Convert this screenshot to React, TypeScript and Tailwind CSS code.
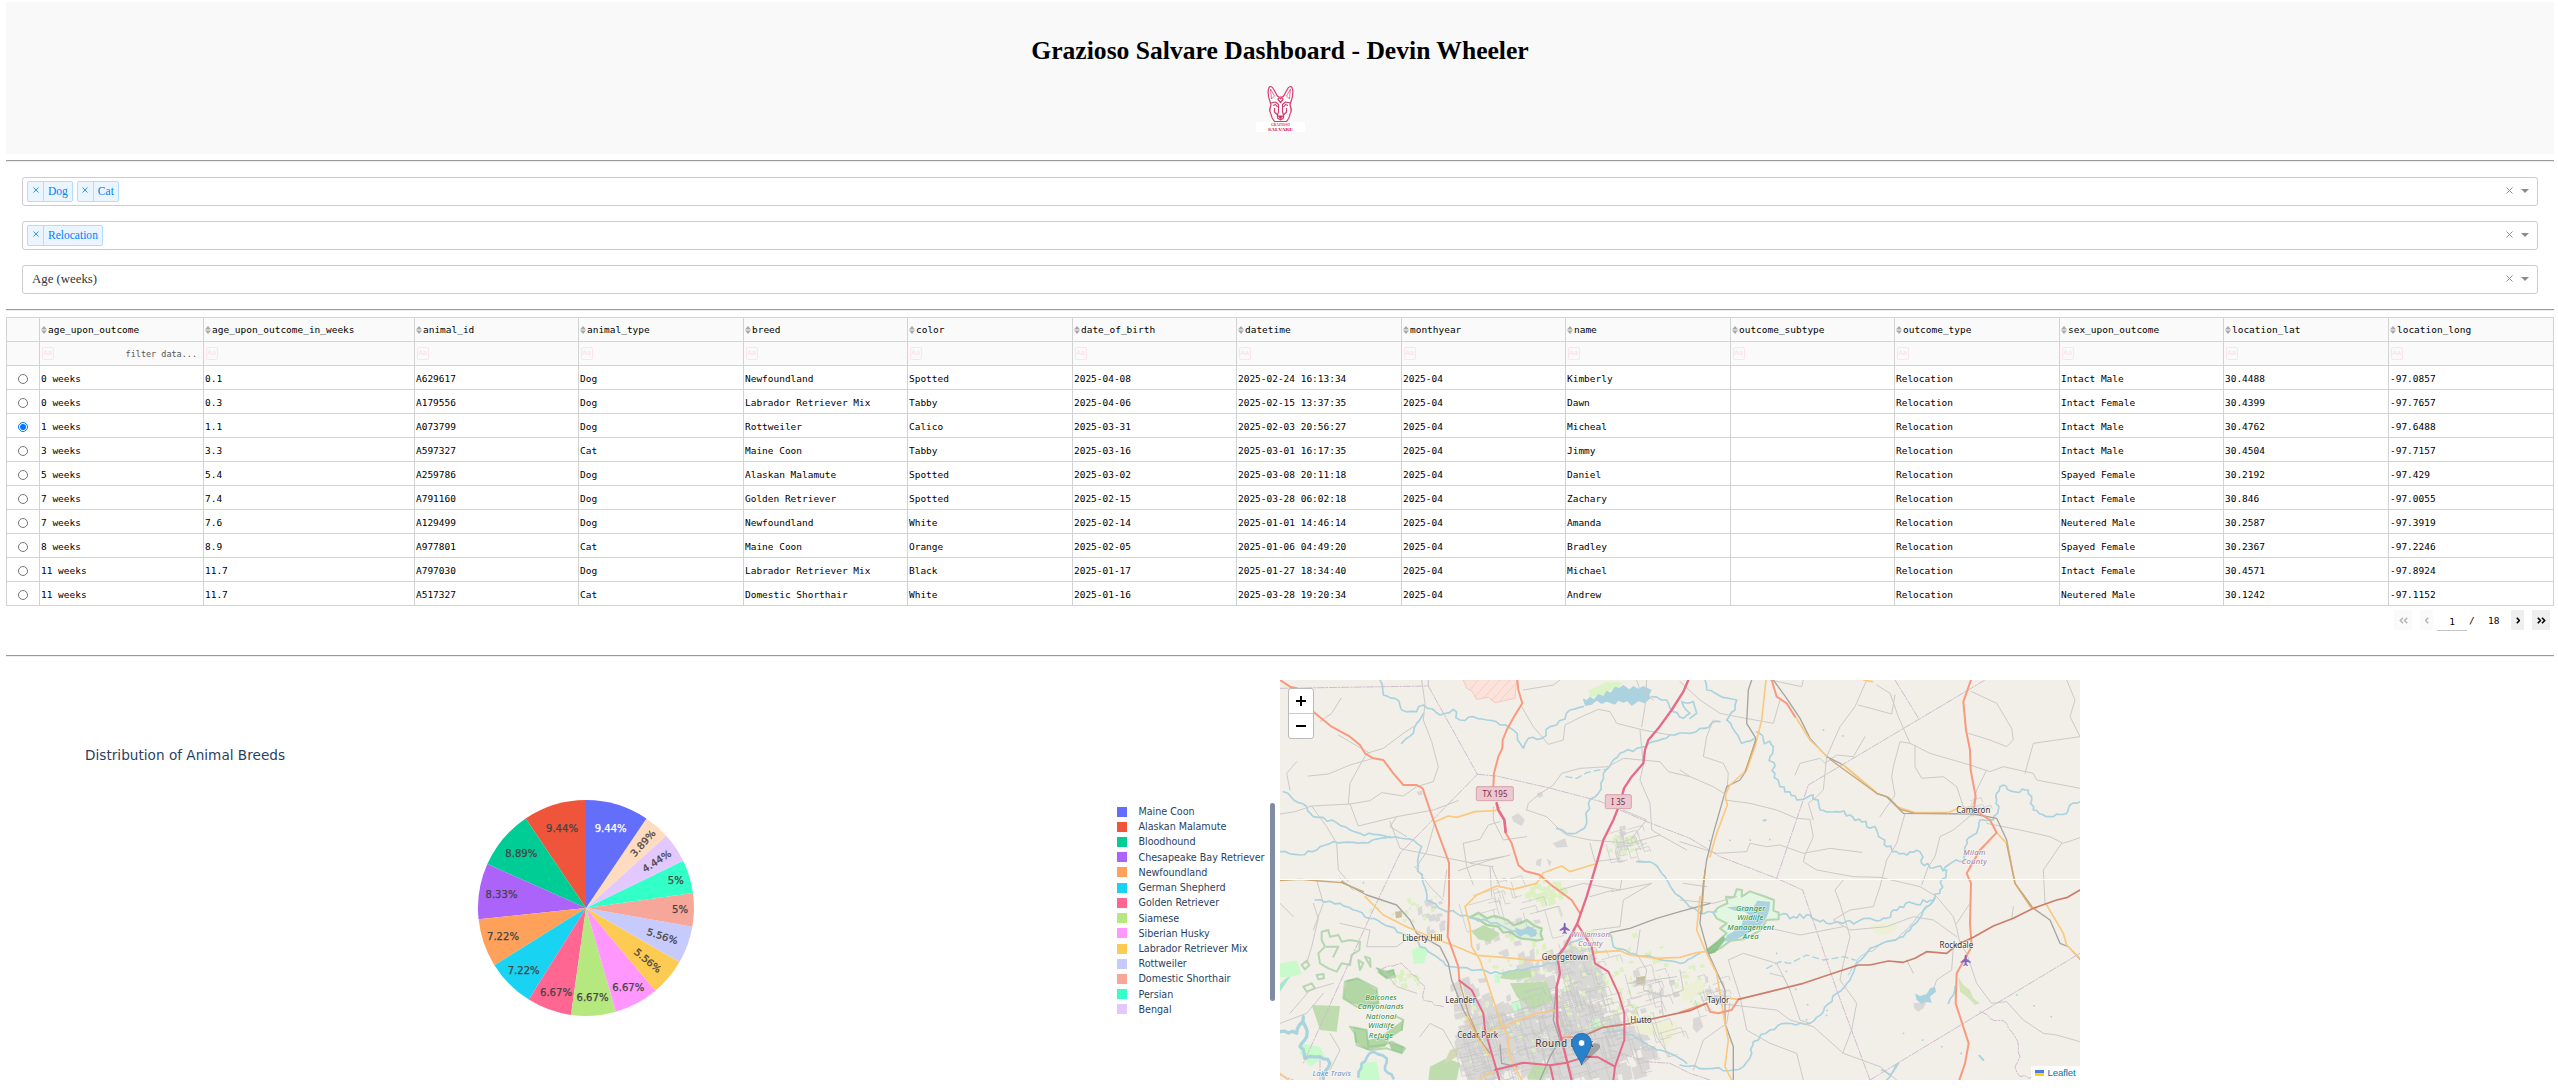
import React from "react";

const COLUMNS = [
  "age_upon_outcome",
  "age_upon_outcome_in_weeks",
  "animal_id",
  "animal_type",
  "breed",
  "color",
  "date_of_birth",
  "datetime",
  "monthyear",
  "name",
  "outcome_subtype",
  "outcome_type",
  "sex_upon_outcome",
  "location_lat",
  "location_long",
];

const ROWS = [
  ["0 weeks", "0.1", "A629617", "Dog", "Newfoundland", "Spotted", "2025-04-08", "2025-02-24 16:13:34", "2025-04", "Kimberly", "", "Relocation", "Intact Male", "30.4488", "-97.0857"],
  ["0 weeks", "0.3", "A179556", "Dog", "Labrador Retriever Mix", "Tabby", "2025-04-06", "2025-02-15 13:37:35", "2025-04", "Dawn", "", "Relocation", "Intact Female", "30.4399", "-97.7657"],
  ["1 weeks", "1.1", "A073799", "Dog", "Rottweiler", "Calico", "2025-03-31", "2025-02-03 20:56:27", "2025-04", "Micheal", "", "Relocation", "Intact Male", "30.4762", "-97.6488"],
  ["3 weeks", "3.3", "A597327", "Cat", "Maine Coon", "Tabby", "2025-03-16", "2025-03-01 16:17:35", "2025-04", "Jimmy", "", "Relocation", "Intact Male", "30.4504", "-97.7157"],
  ["5 weeks", "5.4", "A259786", "Dog", "Alaskan Malamute", "Spotted", "2025-03-02", "2025-03-08 20:11:18", "2025-04", "Daniel", "", "Relocation", "Spayed Female", "30.2192", "-97.429"],
  ["7 weeks", "7.4", "A791160", "Dog", "Golden Retriever", "Spotted", "2025-02-15", "2025-03-28 06:02:18", "2025-04", "Zachary", "", "Relocation", "Intact Female", "30.846", "-97.0055"],
  ["7 weeks", "7.6", "A129499", "Dog", "Newfoundland", "White", "2025-02-14", "2025-01-01 14:46:14", "2025-04", "Amanda", "", "Relocation", "Neutered Male", "30.2587", "-97.3919"],
  ["8 weeks", "8.9", "A977801", "Cat", "Maine Coon", "Orange", "2025-02-05", "2025-01-06 04:49:20", "2025-04", "Bradley", "", "Relocation", "Spayed Female", "30.2367", "-97.2246"],
  ["11 weeks", "11.7", "A797030", "Dog", "Labrador Retriever Mix", "Black", "2025-01-17", "2025-01-27 18:34:40", "2025-04", "Michael", "", "Relocation", "Intact Female", "30.4571", "-97.8924"],
  ["11 weeks", "11.7", "A517327", "Cat", "Domestic Shorthair", "White", "2025-01-16", "2025-03-28 19:20:34", "2025-04", "Andrew", "", "Relocation", "Neutered Male", "30.1242", "-97.1152"],
];

const GRID =
  "grid grid-cols-[33px_164px_211px_164px_165px_164px_165px_164px_165px_164px_165px_164px_165px_164px_165px_165px]";
const CELL = "h-6 border-r border-b border-[#d3d3d3]";

function Rule() {
  return <div className="h-[2px] border-t border-b border-t-[#9a9a9a] border-b-[#eeeeee]" />;
}

function DogLogo() {
  return (
    <svg width="49" height="46" viewBox="0 0 49 46" className="block">
      <rect x="0" y="36" width="49" height="10" fill="#fff" />
      <g transform="translate(-1.500 0)">
        <g fill="none" stroke="#d63a6a" strokeWidth="1.200" strokeLinejoin="round">
          <path fill="#fff" d="M15.500 15.500C13.500 10 13.500 4 14.500 1.500C15.500 0 18 .5 19 3L22.500 9.500L24 11H28L29.500 9.500L33 3C34 .5 36.500 0 37.500 1.500C38.500 4 38.500 10 36.500 15.500L35.500 19C37 23 37.500 25 35.500 28C35 32 33.500 34 32 35.500H20C18.500 34 17 32 16.500 28C14.500 25 15 23 16.500 19Z" />
          <path d="M16 3L17 13L20 10L16 3M36 3L35 13L32 10L36 3" strokeWidth=".7" />
          <path d="M26 16.500L23.500 13.500C23.500 11.500 26 11.500 26 13C26 11.500 28.500 11.500 28.500 13.500Z" />
          <path d="M16 17L21 16L24 18.500V26L23 29V32L26 34L29 32V29L28 26V18.500L31 16L36 17M18.500 19.500L21 18.500L23 21M33.500 19.500L31 18.500L29 21M20 22V26L23 29M32 22V26L29 29" />
          <path d="M24 30H28L26 32.500Z" fill="#b82050" />
        </g>
        <text x="26" y="39.800" textAnchor="middle" textLength="19" lengthAdjust="spacingAndGlyphs" fontFamily="'Liberation Serif', serif" fontWeight="700" fontSize="3.400" fill="#dd3344">GRAZIOSO</text>
        <text x="26" y="44.800" textAnchor="middle" textLength="25" lengthAdjust="spacingAndGlyphs" fontFamily="'Liberation Serif', serif" fontWeight="700" fontSize="4.800" fill="#d8101c">SALVARE</text>
      </g>
    </svg>
  );
}

function Dropdown({ chips, value }: { chips?: string[]; value?: string }) {
  return (
    <div className="flex h-[29px] items-center rounded-[3px] border border-[#cccccc] bg-white pl-1 font-['Liberation_Serif',serif]">
      {chips?.map((c) => (
        <div key={c} className="mr-1 flex h-[21px] items-stretch rounded-[2px] border border-[#b5dbff] bg-[#ebf5ff] text-[11.52px] leading-[19px] text-[#007eff]">
          <span className="flex w-[16px] justify-center border-r border-[#b5dbff] pt-[5px]">
            <svg width="6" height="6" viewBox="0 0 6 6">
              <path d="M.5.5L5.500 5.500M5.500.5L.5 5.500" stroke="#007eff" strokeWidth=".8" />
            </svg>
          </span>
          <span className="px-1">{c}</span>
        </div>
      ))}
      {value && <span className="pl-[5px] text-[12.8px] text-[#333333]">{value}</span>}
      <div className="ml-auto flex items-center gap-2 pr-2">
        <svg width="7" height="7" viewBox="0 0 7 7" className="-mt-[3px]">
          <path d="M.5.5L6.500 6.500M6.500.5L.5 6.500" stroke="#8c8c8c" strokeWidth="1" />
        </svg>
        <svg width="8" height="4" viewBox="0 0 8 4" className="-mt-[2px]">
          <path d="M0 0H8L4 4Z" fill="#8c8c8c" />
        </svg>
      </div>
    </div>
  );
}

function DataTable() {
  return (
    <div className="border-t border-l border-[#d3d3d3] font-['DejaVu_Sans_Mono',monospace] text-[9.48px] text-black">
      <div className={GRID}>
        <div className={`${CELL} bg-[#fafafa]`} />
        {COLUMNS.map((c) => (
          <div key={c} className={`${CELL} flex items-center bg-[#fafafa] pl-px pt-[2px]`}>
            <svg width="6" height="8" viewBox="0 0 6 8" className="mr-px -mt-[2px] shrink-0">
              <path d="M0 3.400L3 0L6 3.400ZM0 4.600H6L3 8Z" fill="#a8a8a8" />
            </svg>
            {c}
          </div>
        ))}
      </div>
      <div className={GRID}>
        <div className={`${CELL} bg-[#fafafa]`} />
        {COLUMNS.map((c, i) => (
          <div key={c} className={`${CELL} flex items-center justify-between bg-[#fafafa] pr-[6px] pl-[1.500px]`}>
            <span className="flex h-[13px] w-[12px] items-center justify-center rounded-[2px] border border-[#fce4ea] font-['Liberation_Sans',sans-serif] text-[7px] text-[#fbdfe6]">
              Aa
            </span>
            {i === 0 && <span className="pt-[2px] text-[8.480px] text-[#555555]">filter data...</span>}
          </div>
        ))}
      </div>
      {ROWS.map((r, ri) => (
        <div key={ri} className={GRID}>
          <div className={`${CELL} flex items-center justify-center pt-[2px]`}>
            <span
              className={
                ri === 2
                  ? "flex size-[10px] items-center justify-center rounded-full border border-[#0075ff] bg-white"
                  : "size-[10px] rounded-full border border-[#767676] bg-white"
              }
            >
              {ri === 2 && <span className="size-[6px] rounded-full bg-[#0075ff]" />}
            </span>
          </div>
          {r.map((v, i) => (
            <div key={i} className={`${CELL} flex items-center pl-px pt-[4px] whitespace-pre`}>
              {v}
            </div>
          ))}
        </div>
      ))}
    </div>
  );
}

function Chevrons({ double, left, color }: { double?: boolean; left?: boolean; color: string }) {
  const w = double ? 9 : 4;
  return (
    <svg width={w} height="7" viewBox={`0 0 ${w} 7`} className={left ? "-scale-x-100" : ""}>
      <path d={double ? "M.8.800L3.400 3.500L.8 6.200M5 .8L7.600 3.500L5 6.200" : "M.8.800L3.400 3.500L.8 6.200"} fill="none" stroke={color} strokeWidth="1.600" />
    </svg>
  );
}

function Pagination() {
  return (
    <div className="mt-[4px] flex h-[21px] justify-end pr-1 font-['DejaVu_Sans_Mono',monospace] text-[9.500px] text-black">
      <span className="mr-2 flex h-5 w-[18px] items-center justify-center bg-[#fafafa]"><Chevrons double left color="#b5b5b5" /></span>
      <span className="mr-1 flex h-5 w-[13px] items-center justify-center bg-[#fafafa]"><Chevrons left color="#b5b5b5" /></span>
      <span className="h-[21px] w-[30px] border-b border-[#c4c4c4] text-center leading-[23px]">1</span>
      <span className="ml-[2px] w-[6px] leading-[22px]">/</span>
      <span className="ml-[13px] w-[23px] leading-[22px]">18</span>
      <span className="mr-2 flex h-5 w-[13px] items-center justify-center bg-[#efefef]"><Chevrons color="#000" /></span>
      <span className="flex h-5 w-[18px] items-center justify-center bg-[#efefef]"><Chevrons double color="#000" /></span>
    </div>
  );
}

type Slice = { n: number; color: string; label: string; x: number; y: number; r?: number; light?: boolean };

/* Counter-clockwise from twelve o'clock; the largest slice closes the circle. */
const SLICES: Slice[] = [
  { n: 17, color: "#EF553B", label: "9.44%", x: 122, y: 58.700 },
  { n: 16, color: "#00CC96", label: "8.89%", x: 81.300, y: 83.700 },
  { n: 15, color: "#AB63FA", label: "8.33%", x: 61.500, y: 124.700 },
  { n: 13, color: "#FFA15A", label: "7.22%", x: 63, y: 166.700 },
  { n: 13, color: "#19D3F3", label: "7.22%", x: 83.700, y: 200.700 },
  { n: 12, color: "#FF6692", label: "6.67%", x: 116, y: 222.700 },
  { n: 12, color: "#B6E880", label: "6.67%", x: 152.500, y: 227.700 },
  { n: 12, color: "#FF97FF", label: "6.67%", x: 188.300, y: 217.700 },
  { n: 10, color: "#FECB52", label: "5.56%", x: 207.700, y: 190.700, r: 40 },
  { n: 10, color: "#C6CAFD", label: "5.56%", x: 222.300, y: 166.300, r: 18 },
  { n: 9, color: "#F7A799", label: "5%", x: 240, y: 139.700 },
  { n: 9, color: "#33FFC9", label: "5%", x: 235.700, y: 110.700 },
  { n: 8, color: "#E2C8FD", label: "4.44%", x: 216.700, y: 91.300, r: -33 },
  { n: 7, color: "#FFDCC0", label: "3.89%", x: 203, y: 73.300, r: -48 },
  { n: 17, color: "#636EFA", label: "9.44%", x: 170.700, y: 58.700, light: true },
];

const LEGEND: [string, string][] = [
  ["Maine Coon", "#636EFA"],
  ["Alaskan Malamute", "#EF553B"],
  ["Bloodhound", "#00CC96"],
  ["Chesapeake Bay Retriever", "#AB63FA"],
  ["Newfoundland", "#FFA15A"],
  ["German Shepherd", "#19D3F3"],
  ["Golden Retriever", "#FF6692"],
  ["Siamese", "#B6E880"],
  ["Siberian Husky", "#FF97FF"],
  ["Labrador Retriever Mix", "#FECB52"],
  ["Rottweiler", "#C6CAFD"],
  ["Domestic Shorthair", "#F7A799"],
  ["Persian", "#33FFC9"],
  ["Bengal", "#E2C8FD"],
];

function Pie() {
  const cx = 146, cy = 138, R = 108;
  let acc = 0;
  return (
    <svg width="300" height="270" viewBox="0 0 300 270" fontFamily="'DejaVu Sans', sans-serif">
      {SLICES.map((s, i) => {
        const a0 = (acc / 180) * Math.PI * 2;
        acc += s.n;
        const a1 = (acc / 180) * Math.PI * 2;
        const p = (a: number) => `${(cx - R * Math.sin(a)).toFixed(2)} ${(cy - R * Math.cos(a)).toFixed(2)}`;
        return <path key={i} fill={s.color} d={`M${cx} ${cy}L${p(a0)}A${R} ${R} 0 0 0 ${p(a1)}Z`} />;
      })}
      {SLICES.map((s, i) => (
        <text
          key={i}
          transform={`translate(${s.x} ${s.y}) rotate(${s.r ?? 0})`}
          y="3.300"
          fontSize="9.600"
          textAnchor="middle"
          textLength={s.label.length > 3 ? 32 : 16}
          lengthAdjust="spacingAndGlyphs"
          fill={s.light ? "#fff" : "#444"}
          stroke={s.light ? "#fff" : "#444"}
          strokeWidth=".25"
        >
          {s.label}
        </text>
      ))}
    </svg>
  );
}

function BreedChart() {
  return (
    <section className="flex h-[400px] w-[1274px] flex-col font-['DejaVu_Sans',sans-serif] text-[#2a3f5f]">
      <h2 className="mt-[66px] ml-[79px] text-[13.600px] leading-[18px] tracking-[0.020px]">Distribution of Animal Breeds</h2>
      <div className="flex">
        <div className="mt-[6px] ml-[434px] w-[300px] shrink-0">
          <Pie />
        </div>
        <ul className="mt-[40px] ml-[377px] w-[153px] shrink-0">
          {LEGEND.map(([name, color]) => (
            <li key={name} className="flex h-[15.230px] items-center text-[9.600px] leading-[15.200px] tracking-[-0.030px] whitespace-nowrap">
              <span className="mr-[11.500px] size-[10px] shrink-0" style={{ background: color }} />
              {name}
            </li>
          ))}
        </ul>
        <div className="mt-[39px] h-[198px] w-[5px] shrink-0 rounded-full bg-[#808ba4]" />
      </div>
    </section>
  );
}

function rng(seed: number) {
  let s = seed;
  return () => {
    s = (s * 1664525 + 1013904223) % 4294967296;
    return s / 4294967296;
  };
}

/* Turns a coarse polyline into a meandering one. */
function meander(points: string, amp: number, seed: number, step = 14) {
  const rand = rng(seed);
  const n = points.trim().split(/[\s,]+/).map(Number);
  const pts: [number, number][] = [];
  for (let i = 0; i < n.length; i += 2) pts.push([n[i], n[i + 1]]);
  const out: string[] = [`${pts[0][0]},${pts[0][1]}`];
  for (let i = 1; i < pts.length; i++) {
    const [x0, y0] = pts[i - 1];
    const [x1, y1] = pts[i];
    const len = Math.hypot(x1 - x0, y1 - y0) || 1;
    const k = Math.max(1, Math.round(len / step));
    for (let j = 1; j <= k; j++) {
      const t = j / k;
      const off = j === k ? 0 : (rand() - 0.5) * 2 * amp;
      out.push(`${(x0 + (x1 - x0) * t - ((y1 - y0) / len) * off).toFixed(1)},${(y0 + (y1 - y0) * t + ((x1 - x0) / len) * off).toFixed(1)}`);
    }
  }
  return out.join(" ");
}

function patches(n: number, cx: number, cy: number, rx: number, ry: number, size: number, seed: number) {
  const r = rng(seed);
  let d = "";
  for (let i = 0; i < n; i++) {
    const a = r() * 6.283, q = Math.sqrt(r());
    const x = cx + Math.cos(a) * q * rx, y = cy + Math.sin(a) * q * ry;
    const w = size * (0.4 + r()), h = size * (0.4 + r());
    d += `M${x.toFixed(0)} ${y.toFixed(0)}l${w.toFixed(0)} ${(-h * 0.3).toFixed(0)}l${(w * 0.25).toFixed(0)} ${h.toFixed(0)}l${(-w).toFixed(0)} ${(h * 0.3).toFixed(0)}z`;
  }
  return d;
}

function streets(n: number, cx: number, cy: number, rx: number, ry: number, len: number, seed: number) {
  const r = rng(seed);
  let d = "";
  for (let i = 0; i < n; i++) {
    const a = r() * 6.283, q = Math.sqrt(r());
    const x = cx + Math.cos(a) * q * rx, y = cy + Math.sin(a) * q * ry;
    const l = len * (0.4 + r());
    if (r() > 0.5) d += `M${x.toFixed(0)} ${y.toFixed(0)}l${l.toFixed(0)} ${(-l * 0.28).toFixed(0)}l${(l * 0.15).toFixed(0)} ${(l * 0.4).toFixed(0)}`;
    else d += `M${x.toFixed(0)} ${y.toFixed(0)}l${(l * 0.28).toFixed(0)} ${l.toFixed(0)}l${(l * 0.4).toFixed(0)} ${(-l * 0.1).toFixed(0)}`;
  }
  return d;
}

const URBAN: [number, number, number, number, number, number][] = [
  [110, 640, 1120, 90, 110, 36],
  [110, 800, 1120, 130, 90, 36],
  [100, 930, 1110, 110, 110, 38],
  [70, 920, 960, 60, 110, 30],
  [60, 760, 1030, 130, 60, 30],
  [44, 1030, 1140, 90, 70, 32],
  [30, 590, 980, 60, 80, 26],
  [26, 780, 880, 90, 60, 28],
  [14, 470, 740, 50, 70, 22],
  [18, 900, 850, 70, 40, 24],
  [8, 1050, 500, 40, 30, 20],
  [8, 1310, 950, 40, 40, 18],
  [14, 700, 790, 120, 60, 16],
  [16, 1120, 960, 90, 80, 16],
];

const GREENS: [number, number, number, number, number, number][] = [
  [50, 960, 930, 110, 160, 12],
  [30, 820, 660, 60, 40, 18],
  [34, 1090, 920, 120, 130, 12],
  [26, 800, 860, 180, 80, 14],
  [26, 800, 1080, 160, 100, 10],
  [22, 1050, 520, 50, 30, 12],
  [16, 400, 700, 120, 60, 11],
  [14, 1270, 940, 60, 60, 14],
  [18, 620, 1080, 60, 100, 11],
  [12, 400, 920, 50, 30, 14],
];

function MapDrawing() {
  return (
    <svg width="800" height="400" viewBox="30 30 2400 1200" className="block" fill="none" strokeLinejoin="round" strokeLinecap="round">
      <rect x="30" y="30" width="2400" height="1200" fill="#f2efe9" />

      {/* land use */}
      <g fill="#d9d8d7">
        {URBAN.map((u, i) => (
          <path key={i} d={patches(u[0], u[1], u[2], u[3], u[4], u[5], 11 + i * 7)} />
        ))}
        <path d="M725 440L745 430L765 450L755 468L730 455ZM848 520L885 505L893 530L860 533ZM800 570L815 565L812 590L798 585ZM830 565L845 575L838 590ZM440 365L455 362L458 375L445 376ZM800 370L815 365L820 378L806 384ZM1270 1045L1290 1040L1300 1070L1280 1088L1268 1075ZM1930 1000L1970 995L1960 1015L1945 1025L1932 1015Z" />
      </g>
      <g fill="#dcf0c2">
        {GREENS.map((u, i) => (
          <path key={i} d={patches(u[0], u[1], u[2], u[3], u[4], u[5], 91 + i * 5)} />
        ))}
      </g>
      <path fill="#eef0d5" d="M1090 1060L1220 1055L1225 1075L1190 1130L1165 1100L1100 1090ZM1800 765L1870 755L1885 775L1850 795L1815 790ZM1230 950L1290 930L1310 970L1240 995ZM300 700L340 690L345 710Z" />
      <path fill="#c8facc" d="M30 880L80 872L95 912L60 920L30 922ZM425 840L455 826L473 845L462 880L432 882ZM673 915L690 908L690 940L675 938ZM722 1000L750 990L758 1018L735 1028ZM965 1050L990 1045L992 1070L968 1072ZM95 1120L150 1130L165 1160L120 1190L90 1150ZM270 1180L320 1175L330 1230H265Z" />
      <path fill="#a5e7cf" d="M62 918L30 965V942L48 925Z" />
      <path fill="#c9bfa0" d="M1098 922L1125 918L1126 940L1100 944ZM375 725L395 722L396 742L378 745Z" />
      <g fill="#bedcae">
        <path d="M125 1005L210 1008L200 1085L150 1080ZM605 785L640 765L690 790L660 815L625 808ZM700 905L780 893L785 920L730 930L690 925ZM720 940L830 935L850 990L790 1020L740 980ZM480 1190L530 1165L570 1180L560 1230H475ZM790 1185L845 1190L815 1230L770 1225Z" />
        <path d="M230 930L262 925L320 960L328 1000L300 1015L245 1000L220 985Z" fill="#b3d6a5" />
        <path d="M250 1070L290 1080L295 1110L330 1100L400 1050L398 1080L360 1105L345 1130L290 1140L255 1115Z" fill="#b3d6a5" />
        <path d="M320 893L345 905L370 898L375 915L350 925L330 912ZM355 1115L403 1130L395 1150L365 1140Z" fill="#a5cf9b" />
        <path d="M2065 920L2080 945L2100 960L2110 985L2130 1000L2115 1005L2095 985L2070 965Z" fill="#d3e5b8" />
        <path d="M540 1140L570 1130L560 1160L520 1185Z" fill="#d3d8b5" />
      </g>
      <g stroke="#8fc48d" strokeWidth="6" opacity=".6">
        <path d="M155 785L175 780L180 800L205 795L215 815L240 810L270 815L268 840L245 855L240 885L215 880L200 905L175 895L150 880L145 850L165 830L155 810ZM170 830L205 830L190 860M95 885L110 872L118 885L105 898ZM100 950L125 940L135 955L110 965ZM140 915L160 912L162 925L145 928ZM265 870L280 880L270 900ZM285 860L300 865L302 890ZM320 895L350 905L370 900L375 920L350 925L325 905M225 935L262 925L320 955L325 1000L260 1010L220 985ZM240 1070L290 1080L295 1130L340 1125L365 1115L405 1135L395 1150L350 1135L300 1140L260 1125L255 1090ZM380 1040L400 1050L395 1080" />
      </g>
      <path stroke="#7cbd7c" strokeWidth="7" strokeOpacity=".55" fill="#e2eed8" d="M600 742L625 728L650 745L672 738L690 742L712 750L730 765L750 760L770 750L795 768L815 775L812 792L818 808L800 812L780 808L755 806L740 800L722 785L700 788L685 770L650 765L625 748Z" />
      <path fill="#fbe3dc" stroke="#f5b7ae" strokeWidth="2" d="M580 30L590 55L605 62L620 88L655 82L675 98L735 85L740 30Z" />
      <path stroke="#f3c3bb" strokeWidth="2" d="M600 60L625 30M615 80L660 30M640 85L690 30M665 92L720 30M690 92L738 40" />
      <path fill="#dcf3c8" d="M955 60L985 48L1010 35L1055 35L1050 52L1020 60L1000 75L960 80Z" />
      <path fill="#e2f6e2" stroke="#8dc38b" strokeWidth="6" strokeOpacity=".6" d="M1330 728L1345 712L1372 700L1368 680L1392 682L1400 658L1416 660L1415 680L1440 664L1480 678L1512 690L1510 722L1526 728V748L1490 750L1470 782L1420 808L1382 812L1350 835L1320 850L1308 842L1345 812L1370 790L1350 775L1370 760L1340 745Z" />
      <path fill="#7fb97c" fillOpacity=".8" d="M1310 840L1345 812L1360 798L1368 808L1335 848L1318 852Z" />

      {/* water */}
      <g fill="#aad3df">
        <path d="M938 85L950 90L960 80L972 88L985 72L1000 78L1010 62L1022 68L1035 50L1048 54L1060 45L1078 58L1090 48L1105 56L1120 48L1145 60L1138 74L1142 84L1125 100L1105 94L1085 108L1072 94L1060 98L1045 92L1035 104L1010 95L995 102L980 92L965 104L945 108Z" />
        <path d="M1462 692L1500 695L1498 720L1490 742L1470 770L1430 792L1395 810L1360 815L1372 795L1390 785L1400 770L1415 765L1420 745L1440 738L1425 725L1395 722L1370 712L1420 708L1450 712Z" />
        <path d="M1935 970L1950 978L1970 972L1980 955L1995 950L1998 965L1980 980L1985 998L1965 995L1955 1002L1940 990Z" />
        <path d="M735 772L755 780L775 768L800 780L798 798L782 802L770 790L750 800L738 790Z" />
      </g>
      <g stroke="#aad3df" strokeWidth="5">
        <polyline points={meander("330,30 340,75 375,85 395,120 440,125 460,105 510,135 550,118 570,150 610,140 650,150 690,165 730,180 760,235 775,205 815,205 840,170 860,165 900,120 940,110", 7, 1)} />
        <polyline points={meander("395,220 430,190 440,160 460,130", 4, 2)} />
        <polyline points={meander("40,365 110,410 130,440 200,458 270,490 350,500 430,510 455,530 445,590 460,640 470,690 520,720 600,742 690,765 740,785 800,790", 6, 3)} />
        <polyline points={meander("30,545 90,555 140,540 190,515 280,518 360,500", 5, 4)} />
        <polyline points={meander("135,690 210,700 300,745 360,770 430,810 500,860 540,890 620,900 690,910 800,890 860,880 885,830 950,800", 5, 5)} />
        <polyline points={meander("860,475 890,490 930,482 950,460 955,400 985,370 1000,310 1050,250 1100,235 1150,215 1200,195 1260,190 1290,175 1350,155", 6, 6)} />
        <polyline points={meander("1145,80 1190,90 1210,125 1240,145 1260,130 1235,95 1270,95 1280,130 1260,145", 4, 7)} />
        <polyline points={meander("1305,30 1310,60 1345,75 1400,90 1395,120 1370,150 1395,185 1415,220 1455,205", 4, 8)} />
        <polyline points={meander("1460,185 1480,210 1510,230 1500,260 1515,310 1530,350 1580,390 1630,375 1650,420 1700,425 1740,435 1820,480 1850,530 1900,550 1950,545 1955,580 2000,590 2030,600 2010,660 1990,690 1930,700 1870,720 1850,745 1800,745 1720,760 1650,755 1620,735 1570,740 1530,735", 8, 9, 10)} />
        <polyline points={meander("1995,685 1960,720 1920,780 1900,800 1850,815 1800,835 1760,880 1740,930 1700,970 1660,1025 1620,1060 1550,1060 1500,1080 1450,1115 1445,1150 1420,1190 1390,1200 1330,1195 1230,1185", 5, 10)} />
        <polyline points={meander("1990,695 1950,730 1915,775 1880,808 1840,820 1770,860 1735,915", 4, 24)} strokeWidth="3" />
        <polyline points={meander("2020,600 2050,575 2085,570 2090,510 2120,490 2130,450 2170,450 2185,420 2180,370 2200,345 2230,365 2275,360 2290,420 2340,440 2390,430 2400,405 2430,395", 5, 11, 10)} />
        <polyline points={meander("1100,575 1150,580 1185,620 1215,670 1250,700 1290,730 1340,725", 4, 12)} />
        <polyline points={meander("1020,790 1030,830 1080,850 1160,865 1230,880 1290,850", 4, 13)} />
        <polyline points={meander("1000,1090 1050,1080 1110,1110 1160,1140 1200,1150 1250,1180", 4, 14)} />
        <polyline points={meander("30,1085 80,1090 100,1040 110,1100 90,1130 105,1165 150,1160 180,1180 160,1230", 6, 15)} strokeWidth="10" />
        <polyline points={meander("265,1220 275,1180 310,1145 350,1165 345,1200 370,1225", 5, 16)} strokeWidth="8" />
        <polyline points={meander("2055,950 2050,975 2035,1000", 3, 17)} />
        <polyline points={meander("1835,1200 1860,1215 1885,1180 1850,1230", 3, 18)} />
        <path strokeDasharray="18 12" strokeWidth="4" d="M888 320L920 325L950 308L985 300L1010 298M1490 895L1530 875L1560 880L1610 855L1660 870L1720 860L1755 870" />
        <path strokeWidth="5" strokeDasharray="1 60" d="M1520 850L1600 1000L1700 1030L1560 1060M1660 180L1760 210M1480 450L1500 510L1300 512M1900 1090L2130 1170M2240 975L2360 1050M280 638L290 640" />
        <path strokeWidth="6" d="M2128 1157L2140 1170M1483 452L1487 450" />
      </g>

      {/* county boundaries */}
      <g stroke="#d0bccd" strokeWidth="3" strokeDasharray="22 5 5 5">
        <path d="M30 55L475 48V30M475 48L622 313L390 550L300 740L100 1180M622 313L680 318L830 352L990 394L1130 455L1260 505L1350 560L1520 625L1598 660L1700 960L1800 1230M1520 625L1615 345L2145 30M1875 30L1947 147M1800 1230L2130 1030L2430 850" />
        <polyline points={meander("2130,1025 2160,1045 2210,1060 2235,1100 2250,1160 2235,1190 2250,1220 2290,1220", 5, 19)} />
        <polyline points={meander("330,900 395,880 440,920 465,950 460,990 520,1010", 5, 20)} />
        <path d="M150 1230V1160M30 1215L70 1230M1020 1140L1130 1175L1200 1180L1260 1210L1320 1230" />
      </g>

      {/* minor roads */}
      <g stroke="#cbcac9" strokeWidth="3">
        <path d="M150 155L185 130L213 85M30 432L75 425L125 408L240 402L300 392L335 368L400 378L440 350L490 335L505 290L485 215L460 150L465 100L455 30M235 400L240 340L270 285L290 250L340 235L400 190L430 170M115 318L175 312L240 285L310 265M60 360L50 310L80 275M125 408L170 470L200 520L205 600L235 635M240 402L265 468L380 440L490 420L565 392M360 455L390 535L410 540L600 578L700 560M380 440L360 470L410 500M495 455L470 545L440 590M300 250L205 195M565 602L650 573L720 555M580 520L630 508L655 465L690 455M580 520L590 590L610 645M665 590L690 650M250 660L210 625M140 630L160 700L130 780" />
        <path d="M770 420L775 400L805 375L850 345L875 310L930 295L1015 290L1060 265L1115 270L1170 275L1195 305L1260 320M770 420L830 440L870 480L890 495L960 510L1080 520L1170 495M755 110L790 170L835 223L880 210L885 165L935 140L985 118L1020 125L1040 160L1120 180L1200 195M760 60L850 45L870 30M1110 180L1120 285L1110 330L1140 400L1145 480L1170 495L1250 540M1060 420L1130 450L1085 505M1130 30L1125 110L1115 170M960 520L975 575L1050 565M870 660L940 640L1050 660L1055 630M1025 665L1145 640L1060 690L1050 770L970 780M960 680L1030 660M670 410L670 450L700 510L770 500M660 590L665 680M600 580L670 590M1100 30L1110 60L1150 90" />
        <path d="M30 700L70 740M130 700L145 745L125 830L110 880M210 760L300 780L290 830L380 830L420 800M530 600L520 680M435 590L480 650L520 690M340 900L380 950L440 970M60 1030L120 960L190 940M30 1060L110 1030L160 970M450 1100L480 1060L520 1080L560 1150M180 1090L210 1140L180 1200" />
        <path d="M1110 780L1100 850L1130 900L1120 960L1190 980L1240 960L1230 900M1080 940L1220 920M1140 1040L1160 1100L1200 1160M1170 960L1180 1040M1230 300L1260 320L1330 350L1370 375M1365 390L1440 400L1520 420L1580 445L1620 448M1230 515L1340 550L1430 545L1440 520L1490 530L1530 525L1600 550L1680 535L1775 547M1630 450L1615 400L1640 380L1660 360L1670 260L1710 170L1755 110L1790 30M1620 450L1630 500L1605 555L1600 575L1640 600L1750 620L1830 622L1950 650L2000 680L2050 740L2060 775L2070 820L2090 850L2120 940L2165 1000L2210 995L2260 1050L2320 1090L2360 1095L2430 1115M1575 315L1590 280L1650 265L1665 280L1700 255L1750 260L1785 200M1765 105L1865 132L1875 75M1820 45L1860 70L1885 140L1920 220L1980 250L2100 285L2160 305L2200 290L2290 310L2300 330L2430 355M1920 220L1890 215L1870 290L1865 320L1875 375L1830 440M1935 225V290L1955 325L2020 320L2060 350L2080 410M2150 300L2120 360L2110 400M1955 645L1975 590L1995 560L2010 500L2050 480L2110 430M1905 430L1880 520L1850 570L1830 650L1810 710L1740 720L1690 750L1740 780L1850 770L1930 740L1990 750L2060 800M2265 310L2290 220L2360 210L2430 200L2400 140L2415 90L2390 30M2095 190L2160 210L2210 230L2230 210L2225 175L2180 100L2105 65M2150 460L2250 480L2340 500L2380 520L2430 503M2375 520L2320 600L2325 700M1720 630L1695 660L1710 700L1740 800L1720 880L1710 930L1760 1000L1745 1080L1718 1150M1230 690L1330 700L1400 680M1480 770L1590 795L1720 770M1375 870L1420 850L1520 880L1560 960L1590 1050L1620 1060M1375 870L1410 980L1430 1080L1500 1120L1580 1150L1600 1230M1340 1000L1520 1020L1560 1050L1630 1070L1720 1150L1830 1190L1880 1230M1500 910L1540 920L1560 960M1380 1000L1370 1060L1300 1110L1270 1200M2050 830L2045 900L2000 930L1990 960M2100 700L2060 760M2225 750L2230 710M1230 35L1290 90L1350 130L1400 140L1510 160L1530 90M1330 150L1310 200L1300 260L1360 280L1375 310L1370 370M1240 640L1310 650M1910 870L1930 910M1600 30L1595 50L1500 30" />
      </g>
      <g stroke="#c6c5c5" strokeWidth="2">
        <path d={streets(110, 920, 1080, 130, 140, 50, 301)} />
        <path d={streets(90, 660, 1130, 110, 110, 50, 302)} />
        <path d={streets(50, 920, 920, 90, 120, 46, 303)} />
        <path d={streets(60, 800, 1060, 100, 110, 50, 304)} />
        <path d={streets(30, 1120, 1010, 120, 140, 60, 305)} />
        <path d={streets(20, 1060, 510, 60, 40, 40, 306)} />
        <path d={streets(20, 700, 700, 140, 70, 60, 307)} />
        <path d={streets(14, 1310, 960, 50, 50, 40, 308)} />
        <path d={streets(10, 2110, 410, 30, 20, 24, 309)} />
      </g>

      {/* railways */}
      <g stroke="#a6a4a2" strokeWidth="4">
        <path d="M215 635L290 675L380 705L420 750L440 790L510 830L535 880L545 930L580 1020L630 1110L660 1150M860 940L850 1050L870 1110L840 1160L810 1230M1020 788L1080 775L1160 745L1230 725L1320 700M690 1125L695 1180L740 1190M1445 30L1435 60L1430 160L1458 205M1510 30L1550 85L1590 145L1620 205L1670 260L1720 285L1820 370L1850 380L1900 430L2110 432L2180 445L2210 510L2235 640L2290 715L2340 750L2370 820L2395 830L2430 868M1458 205L1430 300L1410 330L1370 350L1330 490L1310 570L1300 640L1290 760L1315 850L1365 960L1365 1060L1390 1130L1390 1230" />
      </g>

      {/* secondary roads */}
      <g stroke="#fac97f" strokeWidth="5">
        <path d="M495 455L535 438L560 442L615 425L675 422L690 412M285 680L340 735L410 770L480 800L560 830L620 856L700 862L800 872L870 865M965 848L1050 842L1080 855L1160 865L1230 862L1280 848L1305 845M975 582L900 605L875 588L820 608L800 640L730 658L680 648L620 675L585 710L600 770L605 830L630 870L660 960L690 1050L715 1100L715 1150L755 1230M655 1085L710 1065L800 1030L860 1020M630 1225L690 1195M30 1210L55 1230M590 1040L615 1090L660 1160M1488 30L1475 150L1455 230L1430 300L1380 345L1365 375L1372 405L1340 490L1320 560M1290 680L1280 780L1305 840L1340 910L1350 970L1365 1060L1375 1110L1365 1190L1385 1230M1570 130L1620 210L1670 258M1720 285L1820 368M1885 412L1935 428L2035 428L2070 412L2110 415M2180 488L2210 520L2235 640L2280 710L2300 715M2330 705L2380 790L2390 825L2430 865M1780 30L1808 35M1380 985L1405 988" />
        <path stroke="#c9a777" strokeWidth="4" d="M30 632L90 628L150 633L215 638L280 665M1458 210L1425 305M1305 600L1295 730M1680 268L1820 370L1855 382L1890 418L1935 430H2030M2210 520L2235 640L2285 712M570 940L595 1030L630 1110" />
      </g>

      {/* trunk roads and motorways */}
      <g stroke="#f99a7f" strokeWidth="6">
        <path d="M30 30L60 50L80 55M130 125L150 142L185 170L240 200L270 225L285 250L310 265L340 270L370 310L400 345H440L458 355L490 450L537 578L537 700L533 800L565 890L568 930M742 30L745 60L757 100L735 135L710 180L698 210L697 235L685 260L672 310L670 350M705 485L725 520L745 585L765 603L808 614L850 650L905 690L930 730M870 1105L900 1100L935 1110M2103 30L2080 95L2088 180L2100 240L2102 300L2117 380L2112 415M2120 425L2160 450L2180 488L2130 540L2090 610L2103 640L2100 760L2105 830L2060 910L2057 1000L2096 1120L2085 1180L2068 1230M1505 30L1520 80L1550 100L1575 140M1230 1027L1310 1000L1320 1025L1345 1030L1385 1020L1405 988" />
        <path stroke="#cc7d6a" strokeWidth="5" d="M935 1100L1000 1072L1085 1060L1260 1022L1310 1000M1405 988L1500 965L1600 940L1710 903L1765 885H1800L1855 873L1900 877L1935 865L1970 845L2030 850L2060 825L2110 802L2170 768L2230 745L2290 715L2360 690L2390 683L2430 660" />
      </g>
      <g stroke="#e56b88" strokeWidth="8">
        <path d="M1255 30L1240 65L1205 120L1165 175L1135 210L1125 240L1120 280L1085 320L1062 355L1050 400L1030 450L1000 510L980 580L950 680L922 760L885 830L862 860L870 910L860 950L862 1060L885 1150L905 1230" strokeWidth="7" />
        <path d="M680 400L685 420L703 450L707 485" />
        <path d="M568 932L605 960L640 1030L645 1080L665 1150L680 1200L688 1230M675 1200L760 1178L840 1186L890 1178L950 1160L985 1162L1035 1190L1030 1230M840 1186L850 1230M922 762L965 830L975 880L1015 905L1045 970L1063 1030L1063 1110L1035 1190" strokeWidth="6" />
      </g>

      <path stroke="#fff" strokeWidth="3" d="M30 628.500H2430" />

      {/* route shields */}
      <g fill="#ebc9cf" stroke="#dba2ae" strokeWidth="3">
        <rect x="619" y="350" width="111" height="42" rx="4" />
        <rect x="1006" y="374" width="78" height="42" rx="4" />
      </g>
      <g fill="#7a2b40" fontFamily="'Noto Sans', sans-serif" fontSize="24" textAnchor="middle">
        <text x="675" y="380">TX 195</text>
        <text x="1045" y="405">I 35</text>
      </g>

      {/* airports */}
      <g fill="#8461c4">
        <path id="plane" d="M884 758C887 758 887 762 887 770L899 779V783L887 779V786L891 790V792L884 790L877 792V790L881 786V779L869 783V779L881 770C881 762 881 758 884 758Z" />
        <use href="#plane" x="1203" y="96" />
      </g>

      {/* labels */}
      <g fontFamily="'Noto Sans', sans-serif" textAnchor="middle" stroke="#fff" strokeOpacity=".6" strokeWidth="4" paintOrder="stroke">
        <g fill="#333" fontSize="24">
          <text x="457" y="812" textLength="120">Liberty Hill</text>
          <text x="885" y="869" textLength="139">Georgetown</text>
          <text x="572" y="998" textLength="92">Leander</text>
          <text x="623" y="1103" textLength="122">Cedar Park</text>
          <text x="1113" y="1060" textLength="64">Hutto</text>
          <text x="1345" y="999" textLength="66">Taylor</text>
          <text x="2110" y="430" textLength="102">Cameron</text>
          <text x="2059" y="833" textLength="101">Rockdale</text>
          <text x="883" y="1131" fontSize="30" textLength="174">Round Rock</text>
        </g>
        <g fill="#a57aa8" fontSize="23" fontStyle="italic">
          <text x="961" y="800" textLength="117">Williamson</text>
          <text x="961" y="829" textLength="74">County</text>
          <text x="2113" y="554" textLength="66">Milam</text>
          <text x="2113" y="583" textLength="75">County</text>
        </g>
        <g fill="#1f8a33" fontSize="23" fontStyle="italic">
          <text x="333" y="989" textLength="94">Balcones</text>
          <text x="332" y="1018" textLength="138">Canyonlands</text>
          <text x="333" y="1046" textLength="92">National</text>
          <text x="333" y="1075" textLength="78">Wildlife</text>
          <text x="333" y="1104" textLength="73">Refuge</text>
          <text x="1442" y="722" textLength="88">Granger</text>
          <text x="1441" y="751" textLength="78">Wildlife</text>
          <text x="1442" y="780" textLength="140">Management</text>
          <text x="1442" y="808" textLength="48">Area</text>
        </g>
        <text x="185" y="1218" fontSize="23" fontStyle="italic" fill="#5b93c9" textLength="115">Lake Travis</text>
      </g>

      {/* marker */}
      <path d="M938 1184L985 1140C1000 1125 980 1112 962 1125Z" fill="#000" opacity=".25" />
      <path d="M935 1184C925 1160 906 1140 906 1118A29 28 0 0 1 964 1118C964 1140 945 1160 935 1184Z" fill="#2a81cb" stroke="#2068a8" strokeWidth="2.500" />
      <circle cx="935" cy="1119" r="10" fill="#fff" stroke="#2068a8" strokeWidth="2" />
    </svg>
  );
}

function LeafletMap() {
  return (
    <section className="relative h-[400px] w-[800px] overflow-hidden">
      <MapDrawing />
      <div className="absolute top-[8px] left-[8px] flex w-[26px] flex-col rounded-[3px] border border-[#bcbab6] bg-white">
        <span className="flex h-[24.500px] items-center justify-center border-b border-[#cccccc]">
          <svg width="10" height="10" viewBox="0 0 10 10"><path d="M5 0V10M0 5H10" stroke="#000" strokeWidth="2" /></svg>
        </span>
        <span className="flex h-[24px] items-center justify-center">
          <svg width="10" height="10" viewBox="0 0 10 10"><path d="M0 5H10" stroke="#000" strokeWidth="2" /></svg>
        </span>
      </div>
      <div className="absolute right-0 bottom-0 flex h-[14px] w-[49px] items-center bg-white/80 pl-1 font-['Liberation_Sans',sans-serif] text-[9.600px] tracking-[-0.100px] text-[#0078a8]">
        <svg width="9" height="6" viewBox="0 0 9 6" className="mr-[3.500px]">
          <rect width="9" height="3" fill="#4c7be1" />
          <rect y="3" width="9" height="3" fill="#ffd500" />
        </svg>
        Leaflet
      </div>
    </section>
  );
}

export default function App() {
  return (
    <main className="h-[1092px] w-[2558px] overflow-hidden bg-white pr-1 pl-[6px] pt-[2px]">
      <header className="flex h-[152px] flex-col items-center bg-[#f9f9f9]">
        <h1 className="mt-[34px] font-['Liberation_Serif',serif] text-[25.600px] leading-[30px] font-bold text-black">
          Grazioso Salvare Dashboard - Devin Wheeler
        </h1>
        <div className="mt-5">
          <DogLogo />
        </div>
      </header>
      <div className="mt-[6px]"><Rule /></div>
      <div className="mt-[15px] flex flex-col gap-[15px] px-4">
        <Dropdown chips={["Dog", "Cat"]} />
        <Dropdown chips={["Relocation"]} />
        <Dropdown value="Age (weeks)" />
      </div>
      <div className="mt-[15px]"><Rule /></div>
      <div className="mt-[6px]"><DataTable /></div>
      <Pagination />
      <div className="mt-[24px]"><Rule /></div>
      <div className="mt-[23px] flex">
        <BreedChart />
        <LeafletMap />
      </div>
    </main>
  );
}
